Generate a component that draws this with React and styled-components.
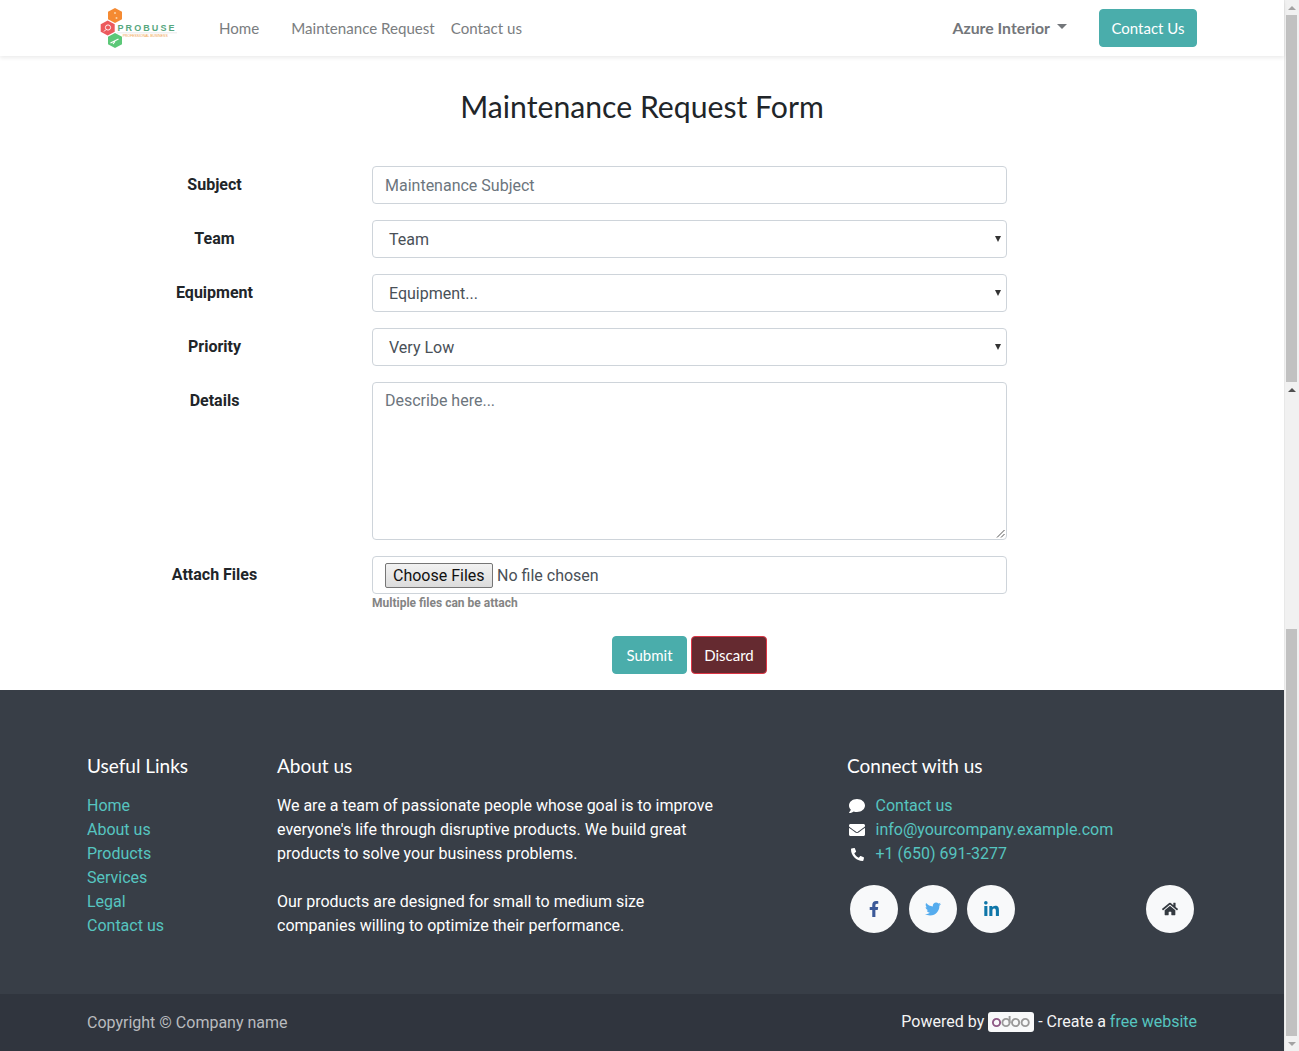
import React from 'react';
import styled, { createGlobalStyle } from 'styled-components';
import { FaFacebookF, FaTwitter, FaLinkedinIn, FaHome, FaComment, FaEnvelope, FaPhone } from 'react-icons/fa';

const Global = createGlobalStyle`
  html, body { margin: 0; padding: 0; overflow: hidden; }
  body { font-family: Roboto, "Liberation Sans", sans-serif; font-size: 16px; color: #212529; background: #fff; }
  * { box-sizing: border-box; }
`;

const HEAD_FONT = `Lato, "Noto Sans", sans-serif`;

const Shell = styled.div`
  display: flex;
  width: 1299px;
  height: 1051px;
  overflow: hidden;
`;

const Page = styled.div`
  width: 1284px;
  display: flex;
  flex-direction: column;
`;

const Rail = styled.div`
  width: 15px;
  background: #f1f1f1;
  border-left: 1px solid #e8e8e8;
  display: flex;
  flex-direction: column;
`;

const RailArrow = styled.div`
  height: 15px;
  width: 100%;
  display: flex;
  align-items: center;
  justify-content: center;
  flex: none;
  &::before {
    content: '';
    border-left: 4px solid transparent;
    border-right: 4px solid transparent;
    border-${p => (p.$down ? 'top' : 'bottom')}: 4px solid ${p => (p.$dim ? '#a3a3a3' : '#505050')};
  }
`;

const RailThumb = styled.div`
  width: 11px;
  margin-left: 1px;
  height: ${p => p.$h}px;
  background: #c1c1c1;
  flex: none;
`;

const RailGap = styled.div`
  height: ${p => p.$h}px;
  flex: none;
`;

const Header = styled.header`
  height: 56px;
  flex: none;
  background: #fff;
  box-shadow: 0 2px 4px rgba(0, 0, 0, 0.08);
  padding: 0 87px;
  display: flex;
  align-items: center;
  position: relative;
`;

const Logo = styled.svg`
  width: 80px;
  height: 42px;
  margin-left: 12px;
  flex: none;
`;

const NavLink = styled.a`
  font-family: ${HEAD_FONT};
  font-size: 15.1px;
  color: #7a7d80;
  margin-left: ${p => p.$ml}px;
`;

const Spacer = styled.div`
  flex: 1;
`;

const UserMenu = styled.div`
  font-family: ${HEAD_FONT};
  font-weight: 700;
  font-size: 15.8px;
  color: #73767a;
  display: flex;
  align-items: center;
  margin-right: 32px;
  padding-bottom: 2px;
  &::after {
    content: '';
    margin-left: 7px;
    margin-top: -1px;
    border-left: 5px solid transparent;
    border-right: 5px solid transparent;
    border-top: 5px solid #73767a;
  }
`;

const TealButton = styled.button`
  height: 38px;
  width: ${p => p.$w}px;
  padding: 0;
  background: #4aadab;
  border: 1px solid #4aadab;
  border-radius: 4px;
  color: #fff;
  font-family: ${HEAD_FONT};
  font-size: 15px;
`;

const DiscardButton = styled(TealButton)`
  background: #652a30;
  border-color: #dc3545;
  margin-left: 4px;
`;

const Content = styled.main`
  flex: 1;
  display: flex;
  flex-direction: column;
`;

const Title = styled.h1`
  margin: 32px 0 42px 0;
  font-family: ${HEAD_FONT};
  font-size: 30.2px;
  line-height: 36px;
  font-weight: 400;
  text-align: center;
  color: #212529;
`;

const Form = styled.form`
  width: 1007px;
  display: flex;
  flex-direction: column;
`;

const Row = styled.div`
  display: grid;
  grid-template-columns: 372px 635px;
  margin-bottom: 16px;
`;

const Label = styled.label`
  font-weight: 700;
  font-size: 16px;
  line-height: 24px;
  padding: 7px 30px 0 87px;
  text-align: center;
  color: #212529;
`;

const TextInput = styled.div`
  height: 38px;
  border: 1px solid #ced4da;
  border-radius: 4px;
  padding: 7px 12px 5px 12px;
  line-height: 24px;
  color: #6c757d;
  background: #fff;
`;

const SelectBox = styled(TextInput)`
  color: #495057;
  padding-left: 16px;
  position: relative;
  &::after {
    content: '';
    position: absolute;
    right: 5px;
    top: 15px;
    border-left: 3px solid transparent;
    border-right: 3px solid transparent;
    border-top: 6px solid #333;
  }
`;

const TextArea = styled(TextInput)`
  height: 158px;
  padding-top: 6px;
  position: relative;
`;

const Grip = styled.svg`
  position: absolute;
  right: 1px;
  bottom: 1px;
  width: 9px;
  height: 9px;
`;

const FileBox = styled(TextInput)`
  color: #495057;
  padding: 6px 12px;
  display: flex;
  align-items: center;
`;

const ChooseFiles = styled.span`
  display: inline-block;
  height: 25px;
  line-height: 23px;
  padding: 0 7px;
  border: 1px solid #767676;
  border-radius: 2px;
  background: linear-gradient(#f2f2f2, #dcdcdc);
  color: #111;
  margin-right: 4.5px;
`;

const NoFile = styled.span`
  padding-top: 2px;
`;

const Help = styled.div`
  font-size: 12px;
  font-weight: 700;
  line-height: 18px;
  color: #848484;
`;

const Actions = styled.div`
  display: flex;
  justify-content: center;
  margin-top: 8px;
  padding-left: 372px;
`;

const Footer = styled.footer`
  background: #383e47;
  color: #fff;
  height: 304px;
  flex: none;
  padding: 64px 87px 0 87px;
  display: flex;
`;

const LinksCol = styled.div`
  width: 190px;
  flex: none;
`;

const AboutCol = styled.div`
  width: 570px;
  flex: none;
`;

const ConnectCol = styled.div`
  flex: 1;
`;

const FootHead = styled.h5`
  margin: 0 0 16px 0;
  font-family: ${HEAD_FONT};
  font-weight: 400;
  font-size: 19px;
  line-height: 24px;
  color: #fff;
`;

const FootLink = styled.a`
  display: block;
  color: #56c5c0;
  line-height: 24px;
`;

const AboutText = styled.p`
  margin: 0 0 24px 0;
  line-height: 24px;
  width: 442px;
`;

const ContactRow = styled.div`
  display: flex;
  align-items: center;
  height: 24px;
`;

const ContactIcon = styled.span`
  width: 28.5px;
  display: flex;
  padding-left: 2px;
  font-size: 16px;
  color: #fff;
`;

const PhoneIcon = styled(FaPhone)`
  transform: scaleX(-1);
  font-size: 13px;
  margin-left: 2px;
`;

const Socials = styled.div`
  display: flex;
  margin-top: 19px;
  padding-left: 3px;
`;

const Social = styled.a`
  width: 48px;
  height: 48px;
  border-radius: 50%;
  background: #f8f9fa;
  display: flex;
  align-items: center;
  justify-content: center;
  color: ${p => p.$color};
  font-size: ${p => p.$size || 16}px;
  margin-right: ${p => p.$mr || 0}px;
  margin-left: ${p => (p.$auto ? 'auto' : '0')};
`;

const BottomBar = styled.div`
  height: 57px;
  flex: none;
  background: #30353e;
  color: #f4f4f4;
  padding: 0 87px;
  display: flex;
  align-items: center;
  justify-content: space-between;
`;

const Copyright = styled.span`
  color: #b9bbbe;
`;

const Powered = styled.span`
  display: flex;
  align-items: center;
  padding-bottom: 2px;
`;

const OdooBadge = styled.span`
  width: 46px;
  height: 20px;
  margin: 0 4px;
  background: #f8f9fa;
  border-radius: 3px;
  display: flex;
  align-items: center;
  justify-content: center;
`;

const FreeLink = styled.a`
  color: #56c5c0;
  margin-left: 4px;
`;

const hexPoints = (cx, cy) =>
  [[0, -7.5], [7, -3.7], [7, 3.7], [0, 7.5], [-7, 3.7], [-7, -3.7]]
    .map(([x, y]) => `${cx + x},${cy + y}`)
    .join(' ');

function ProbuseLogo() {
  return (
    <Logo viewBox="0 0 80 42">
      <polygon points={hexPoints(16, 8.5)} fill="#f58a32" />
      <polygon points={hexPoints(8.7, 21)} fill="#ec5a5d" />
      <polygon points={hexPoints(16, 33.5)} fill="#5cc878" />
      <circle cx="16" cy="6" r="1" fill="#fbd3a8" />
      <circle cx="17.5" cy="11" r="1" fill="#fbd3a8" />
      <circle cx="9" cy="20.5" r="2.6" fill="none" stroke="#fff" strokeWidth="0.9" />
      <path d="M7 22.5l-2 2" stroke="#fff" strokeWidth="1" />
      <path d="M11.5 36l8-4M14 37l2-2.5" stroke="#fff" strokeWidth="1.2" />
      <text x="18.5" y="24" fontFamily="'Liberation Sans', sans-serif" fontSize="9" fontWeight="700" textLength="57" lengthAdjust="spacing" fill="#57a77e">PROBUSE</text>
      <rect x="18" y="25.6" width="60" height="0.6" fill="#ddd" />
      <text x="23.7" y="30" fontFamily="'Liberation Sans', sans-serif" fontSize="4" textLength="45" lengthAdjust="spacingAndGlyphs" fill="#f0a04b">PROFESSIONAL BUSINESS</text>
    </Logo>
  );
}

function OdooLogo() {
  return (
    <svg width="40" height="16" viewBox="0 0 40 16">
      <circle cx="5.5" cy="8.5" r="3.6" fill="none" stroke="#8f5a86" strokeWidth="1.9" />
      <circle cx="15" cy="8.5" r="3.6" fill="none" stroke="#9a9a9a" strokeWidth="1.9" />
      <path d="M18.6 2v7" stroke="#9a9a9a" strokeWidth="1.9" />
      <circle cx="24.6" cy="8.5" r="3.6" fill="none" stroke="#9a9a9a" strokeWidth="1.9" />
      <circle cx="34.2" cy="8.5" r="3.6" fill="none" stroke="#9a9a9a" strokeWidth="1.9" />
    </svg>
  );
}

const fields = [
  { label: 'Subject', kind: 'input', text: 'Maintenance Subject' },
  { label: 'Team', kind: 'select', text: 'Team' },
  { label: 'Equipment', kind: 'select', text: 'Equipment...' },
  { label: 'Priority', kind: 'select', text: 'Very Low' },
];

export default function App() {
  return (
    <>
      <Global />
      <Shell>
        <Page>
          <Header>
            <ProbuseLogo />
            <NavLink $ml={40}>Home</NavLink>
            <NavLink $ml={32}>Maintenance Request</NavLink>
            <NavLink $ml={16}>Contact us</NavLink>
            <Spacer />
            <UserMenu>Azure Interior</UserMenu>
            <TealButton $w={98}>Contact Us</TealButton>
          </Header>
          <Content>
            <Title>Maintenance Request Form</Title>
            <Form>
              {fields.map(f => (
                <Row key={f.label}>
                  <Label>{f.label}</Label>
                  {f.kind === 'input' ? <TextInput>{f.text}</TextInput> : <SelectBox>{f.text}</SelectBox>}
                </Row>
              ))}
              <Row>
                <Label>Details</Label>
                <TextArea>
                  Describe here...
                  <Grip viewBox="0 0 9 9">
                    <path d="M8.5 1L1 8.5M8.5 5L5 8.5" stroke="#555" strokeWidth="1" fill="none" />
                  </Grip>
                </TextArea>
              </Row>
              <Row>
                <Label>Attach Files</Label>
                <div>
                  <FileBox>
                    <ChooseFiles>Choose Files</ChooseFiles>
                    <NoFile>No file chosen</NoFile>
                  </FileBox>
                  <Help>Multiple files can be attach</Help>
                </div>
              </Row>
              <Actions>
                <TealButton $w={75}>Submit</TealButton>
                <DiscardButton $w={76}>Discard</DiscardButton>
              </Actions>
            </Form>
          </Content>
          <Footer>
            <LinksCol>
              <FootHead>Useful Links</FootHead>
              {['Home', 'About us', 'Products', 'Services', 'Legal', 'Contact us'].map(l => (
                <FootLink key={l}>{l}</FootLink>
              ))}
            </LinksCol>
            <AboutCol>
              <FootHead>About us</FootHead>
              <AboutText>We are a team of passionate people whose goal is to improve everyone's life through disruptive products. We build great products to solve your business problems.</AboutText>
              <AboutText>Our products are designed for small to medium size companies willing to optimize their performance.</AboutText>
            </AboutCol>
            <ConnectCol>
              <FootHead>Connect with us</FootHead>
              <ContactRow><ContactIcon><FaComment /></ContactIcon><FootLink>Contact us</FootLink></ContactRow>
              <ContactRow><ContactIcon><FaEnvelope /></ContactIcon><FootLink>info@yourcompany.example.com</FootLink></ContactRow>
              <ContactRow><ContactIcon><PhoneIcon /></ContactIcon><FootLink>+1 (650) 691-3277</FootLink></ContactRow>
              <Socials>
                <Social $color="#3b5998" $mr={11}><FaFacebookF /></Social>
                <Social $color="#55acee" $mr={10}><FaTwitter /></Social>
                <Social $color="#0e76a8" $size={17}><FaLinkedinIn /></Social>
                <Social $color="#343a40" $auto $mr={3}><FaHome /></Social>
              </Socials>
            </ConnectCol>
          </Footer>
          <BottomBar>
            <Copyright>Copyright © Company name</Copyright>
            <Powered>
              Powered by <OdooBadge><OdooLogo /></OdooBadge> - Create a <FreeLink>free website</FreeLink>
            </Powered>
          </BottomBar>
        </Page>
        <Rail>
          <RailArrow $dim />
          <RailThumb $h={367} />
          <RailArrow />
          <RailGap $h={232} />
          <RailThumb $h={407} />
          <RailArrow $down $dim />
        </Rail>
      </Shell>
    </>
  );
}
